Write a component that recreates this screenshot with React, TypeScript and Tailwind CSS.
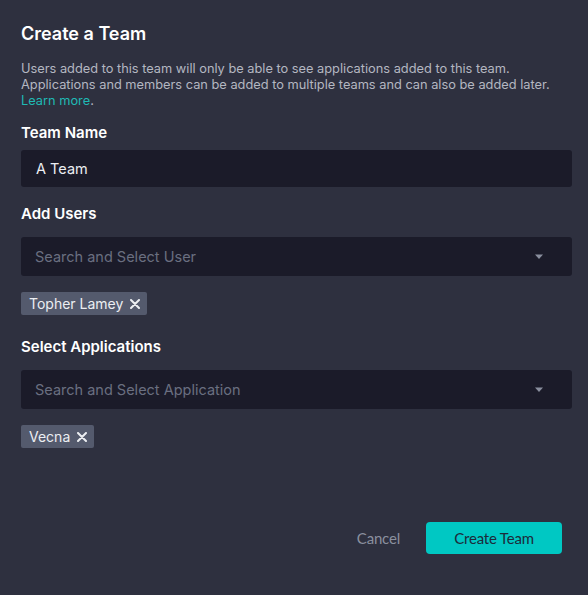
function Caret() {
  return (
    <svg width="10" height="6" viewBox="0 0 10 6" className="shrink-0">
      <path d="M1 0.5h8L5 5z" fill="#8a8f9e" />
    </svg>
  );
}

function Cross() {
  return (
    <svg width="10" height="10" viewBox="0 0 10 10" className="shrink-0">
      <path d="M1 1l8 8M9 1l-8 8" stroke="#eceef2" strokeWidth="2" strokeLinecap="round" />
    </svg>
  );
}

function Tag({ label }: { label: string }) {
  return (
    <span className="inline-flex h-[23px] items-center gap-[7px] self-start rounded-[2px] bg-[#545a6d] pl-[8px] pr-[7px] text-[14px] text-[#eceef2]">
      {label}
      <Cross />
    </span>
  );
}

function Select({ placeholder }: { placeholder: string }) {
  return (
    <div className="flex h-[39px] items-center justify-between rounded-[3px] bg-[#1b1b29] pl-[14px] pr-[28px]">
      <span className="text-[14.5px] text-[#6a6f80]">{placeholder}</span>
      <Caret />
    </div>
  );
}

export default function App() {
  return (
    <div className="flex h-[595px] w-[588px] flex-col bg-[#2e303f] pl-[21px] pr-[16px] pt-[23px] font-['Inter',sans-serif] text-white">
      <h1 className="text-[18px] font-semibold leading-[22px]">Create a Team</h1>
      <p className="mt-[16px] text-[12.8px] leading-[16px] text-[#b4b7c1]">
        Users added to this team will only be able to see applications added to this team.
        <br />
        Applications and members can be added to multiple teams and can also be added later.
        <br />
        <span className="text-[#1fb9b4]">Learn more</span>.
      </p>

      <label className="mt-[15px] text-[15px] font-semibold leading-[18px]">Team Name</label>
      <div className="mt-[8px] flex h-[37px] items-center rounded-[3px] bg-[#1b1b29] px-[15px] text-[14.5px] text-[#eceef2]">
        A Team
      </div>

      <label className="mt-[18px] text-[15px] font-semibold leading-[18px]">Add Users</label>
      <div className="mt-[14px] flex flex-col gap-[16px]">
        <Select placeholder="Search and Select User" />
        <Tag label="Topher Lamey" />
      </div>

      <label className="mt-[23px] text-[15px] font-semibold leading-[18px]">Select Applications</label>
      <div className="mt-[14px] flex flex-col gap-[16px]">
        <Select placeholder="Search and Select Application" />
        <Tag label="Vecna" />
      </div>

      <div className="mt-[74px] flex items-center justify-end gap-[26px] pr-[10px] font-['Lato',sans-serif]">
        <button className="text-[15px] tracking-[-0.2px] text-[#8a8f9e]">Cancel</button>
        <button className="h-[32px] w-[136px] rounded-[4px] bg-[#00c8c3] text-[15px] tracking-[-0.2px] text-[#1d2b3a]">
          Create Team
        </button>
      </div>
    </div>
  );
}
